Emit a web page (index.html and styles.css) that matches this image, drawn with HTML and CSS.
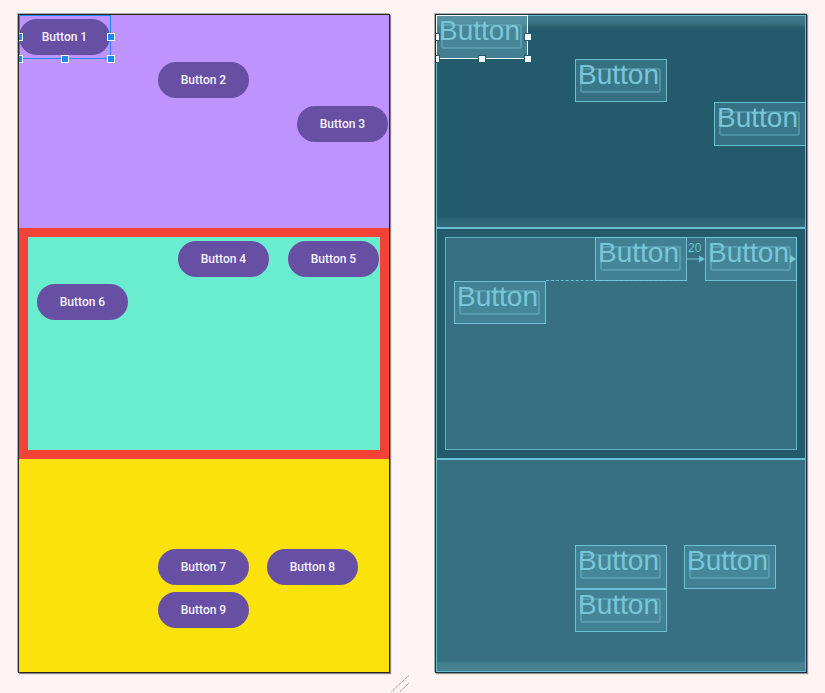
FILE: index.html
```html
<!DOCTYPE html>
<html lang="en">
<head>
<meta charset="utf-8">
<title>Layout editor</title>
<link rel="stylesheet" href="styles.css">
</head>
<body>
<div class="stage">
  <div class="col">
    <div class="device design">
      <section class="sec sec1">
        <div class="view selected">
          <div class="pill">Button 1</div>
          <span class="h h-ml"></span><span class="h h-mr"></span>
          <span class="h h-bl"></span><span class="h h-bm"></span><span class="h h-br"></span>
        </div>
        <div class="view v2"><div class="pill">Button 2</div></div>
        <div class="view v3"><div class="pill">Button 3</div></div>
      </section>
      <section class="sec sec2">
        <div class="inner">
          <div class="row r1">
            <div class="view"><div class="pill">Button 4</div></div>
            <div class="link"></div>
            <div class="view"><div class="pill">Button 5</div></div>
          </div>
          <div class="row r2">
            <div class="view v6"><div class="pill">Button 6</div></div>
          </div>
        </div>
      </section>
      <section class="sec sec3">
        <div class="row r3">
          <div class="view"><div class="pill">Button 7</div></div>
          <div class="view"><div class="pill">Button 8</div></div>
        </div>
        <div class="row">
          <div class="view"><div class="pill">Button 9</div></div>
        </div>
      </section>
    </div>
    <svg class="grip" width="19" height="17" viewBox="0 0 19 17">
      <line x1="0.5" y1="16.5" x2="18" y2="0.5" />
      <line x1="9" y1="16.5" x2="18" y2="8" />
    </svg>
  </div>

  <div class="device blueprint">
    <section class="sec sec1">
      <div class="view selected">
        <span class="rect"></span><span class="label">Button</span>
        <span class="h h-ml"></span><span class="h h-mr"></span>
        <span class="h h-bl"></span><span class="h h-bm"></span><span class="h h-br"></span>
      </div>
      <div class="view v2"><span class="rect"></span><span class="label">Button</span></div>
      <div class="view v3"><span class="rect"></span><span class="label">Button</span></div>
    </section>
    <section class="sec sec2">
      <div class="inner">
        <div class="row r1">
          <div class="view"><span class="rect"></span><span class="label">Button</span></div>
          <div class="link">
            <span class="dist">20</span>
            <svg class="arrow" width="18" height="8" viewBox="0 0 18 8">
              <line x1="0" y1="4" x2="13" y2="4" />
              <polygon points="12,0.5 18,4 12,7.5" />
            </svg>
          </div>
          <div class="view"><span class="rect"></span><span class="label">Button</span><span class="tip"></span></div>
        </div>
        <div class="row r2">
          <div class="view v6"><span class="rect"></span><span class="label">Button</span></div>
          <div class="dash"></div>
        </div>
      </div>
    </section>
    <section class="sec sec3">
      <div class="row r3">
        <div class="view"><span class="rect"></span><span class="label">Button</span></div>
        <div class="view"><span class="rect"></span><span class="label">Button</span></div>
      </div>
      <div class="row">
        <div class="view"><span class="rect"></span><span class="label">Button</span></div>
      </div>
    </section>
  </div>
</div>
</body>
</html>
```

FILE: styles.css
```css
html, body {
  margin: 0;
  padding: 0;
  background: #fff4f4;
}

.stage {
  display: flex;
  align-items: flex-start;
  gap: 45px;
  padding: 14px 0 0 18px;
}

.col {
  display: flex;
  flex-direction: column;
  align-items: flex-start;
}

.device {
  width: 370px;
  height: 657px;
  display: flex;
  flex-direction: column;
  overflow: hidden;
  border: 1px solid #262626;
  box-shadow: 1px 1px 1px rgba(0, 0, 0, 0.45), -1px -1px 0 rgba(90, 80, 80, 0.45);
}

.sec {
  box-sizing: border-box;
  flex: none;
  display: flex;
  flex-direction: column;
  align-items: flex-start;
}

.sec1 { height: 213px; }
.sec2 { height: 231px; padding: 9px; align-items: stretch; }
.sec3 { height: 213px; padding: 86px 0 0 139px; }

.inner {
  height: 213px;
  display: flex;
  flex-direction: column;
  align-items: stretch;
}

.row {
  display: flex;
  align-items: flex-start;
}

.r1 { justify-content: flex-end; }
.r3 { gap: 17px; }

.link { width: 18px; height: 43.5px; flex: none; }

.view {
  position: relative;
  flex: none;
  width: 92px;
  height: 43.5px;
  box-sizing: border-box;
}

.v2 { margin-left: 139px; }
.v3 { align-self: flex-end; }
.v6 { margin-left: 9px; }

/* ---------- design surface ---------- */
.design .sec1 { background: #be93fe; }
.design .sec2 { background: #f44336; }
.design .inner { background: #6aedcf; }
.design .sec3 { background: #fae20a; }

.pill {
  margin-top: 3.5px;
  width: 91px;
  height: 36px;
  border-radius: 18px;
  background: #6750a4;
  color: #f6f2ff;
  font-family: Roboto, "Liberation Sans", sans-serif;
  font-weight: 500;
  font-size: 12px;
  display: flex;
  align-items: center;
  justify-content: center;
}

.design .selected { outline: 1px solid #1b8af2; outline-offset: -1px; }

.h {
  position: absolute;
  width: 8px;
  height: 8px;
  box-sizing: border-box;
  margin: -4px 0 0 -4px;
}
.h-ml { left: 0; top: 50%; }
.h-mr { left: 100%; top: 50%; }
.h-bl { left: 0; top: 100%; }
.h-bm { left: 50%; top: 100%; }
.h-br { left: 100%; top: 100%; }

.design .h { background: #1b8af2; border: 1px solid #ffffff; }

.grip {
  align-self: flex-end;
  margin: 2px -20px 0 0;
}
.grip line {
  stroke: #7a7474;
  stroke-width: 1;
  stroke-dasharray: 1.2 0.8;
}

/* ---------- blueprint ---------- */
.blueprint {
  border-color: #17323c;
  box-shadow: 1px 1px 1px rgba(0, 0, 0, 0.4), -1px -1px 0 rgba(110, 100, 100, 0.5);
  font-family: "Liberation Sans", Arial, sans-serif;
}

.blueprint .sec { outline: 1px solid #67bfd3; outline-offset: -1px; }

.blueprint .sec1 {
  background: linear-gradient(#417a8a 0, #3a7383 8px, #28606f 12px, #235b6d 14px, #235b6d 201px, #2c6475 205px, #356b7c 213px);
}
.blueprint .sec2 { background: #235b6d; }
.blueprint .inner {
  background: #377083;
  outline: 1px solid rgba(106, 195, 214, 0.8);
  outline-offset: -1px;
}
.blueprint .sec3 {
  background: linear-gradient(#377083 0, #377083 202px, #43808f 204px, #48838f 213px);
}

.blueprint .view {
  display: grid;
  background: rgba(110, 190, 210, 0.22);
  outline: 1px solid rgba(118, 205, 224, 0.85);
  outline-offset: -1px;
}
.blueprint .view > .rect,
.blueprint .view > .label {
  grid-area: 1 / 1;
}

.rect {
  margin: 9px 6px 0 5px;
  height: 25px;
  box-sizing: border-box;
  border: 2px solid rgba(120, 195, 212, 0.35);
  border-radius: 3px;
  background: rgba(130, 200, 215, 0.08);
}

.label {
  font-size: 28px;
  line-height: normal;
  color: #79c6da;
  padding-left: 3px;
  white-space: nowrap;
  align-self: start;
}

.blueprint .selected {
  background: rgba(140, 205, 220, 0.32);
  outline: 1px solid #f2fbfd;
}

.blueprint .h { background: #eefafc; border: 1px solid #235b6d; }

.blueprint .link {
  position: relative;
  display: flex;
  flex-direction: column;
  align-items: flex-start;
}
.dist {
  margin: 4px 0 0 1px;
  font-size: 12px;
  line-height: 14px;
  color: #6ec2d5;
}
.arrow line { stroke: #6ec2d5; stroke-width: 1; }
.arrow polygon { fill: #6ec2d5; }

.tip {
  position: absolute;
  right: 1px;
  top: 18px;
  width: 0;
  height: 0;
  border-top: 4px solid transparent;
  border-bottom: 4px solid transparent;
  border-left: 6px solid #7ccbde;
}

.dash {
  flex: none;
  width: 141px;
  height: 0;
  margin-top: -1px;
  border-top: 1px dashed #6ac3d6;
}
```
